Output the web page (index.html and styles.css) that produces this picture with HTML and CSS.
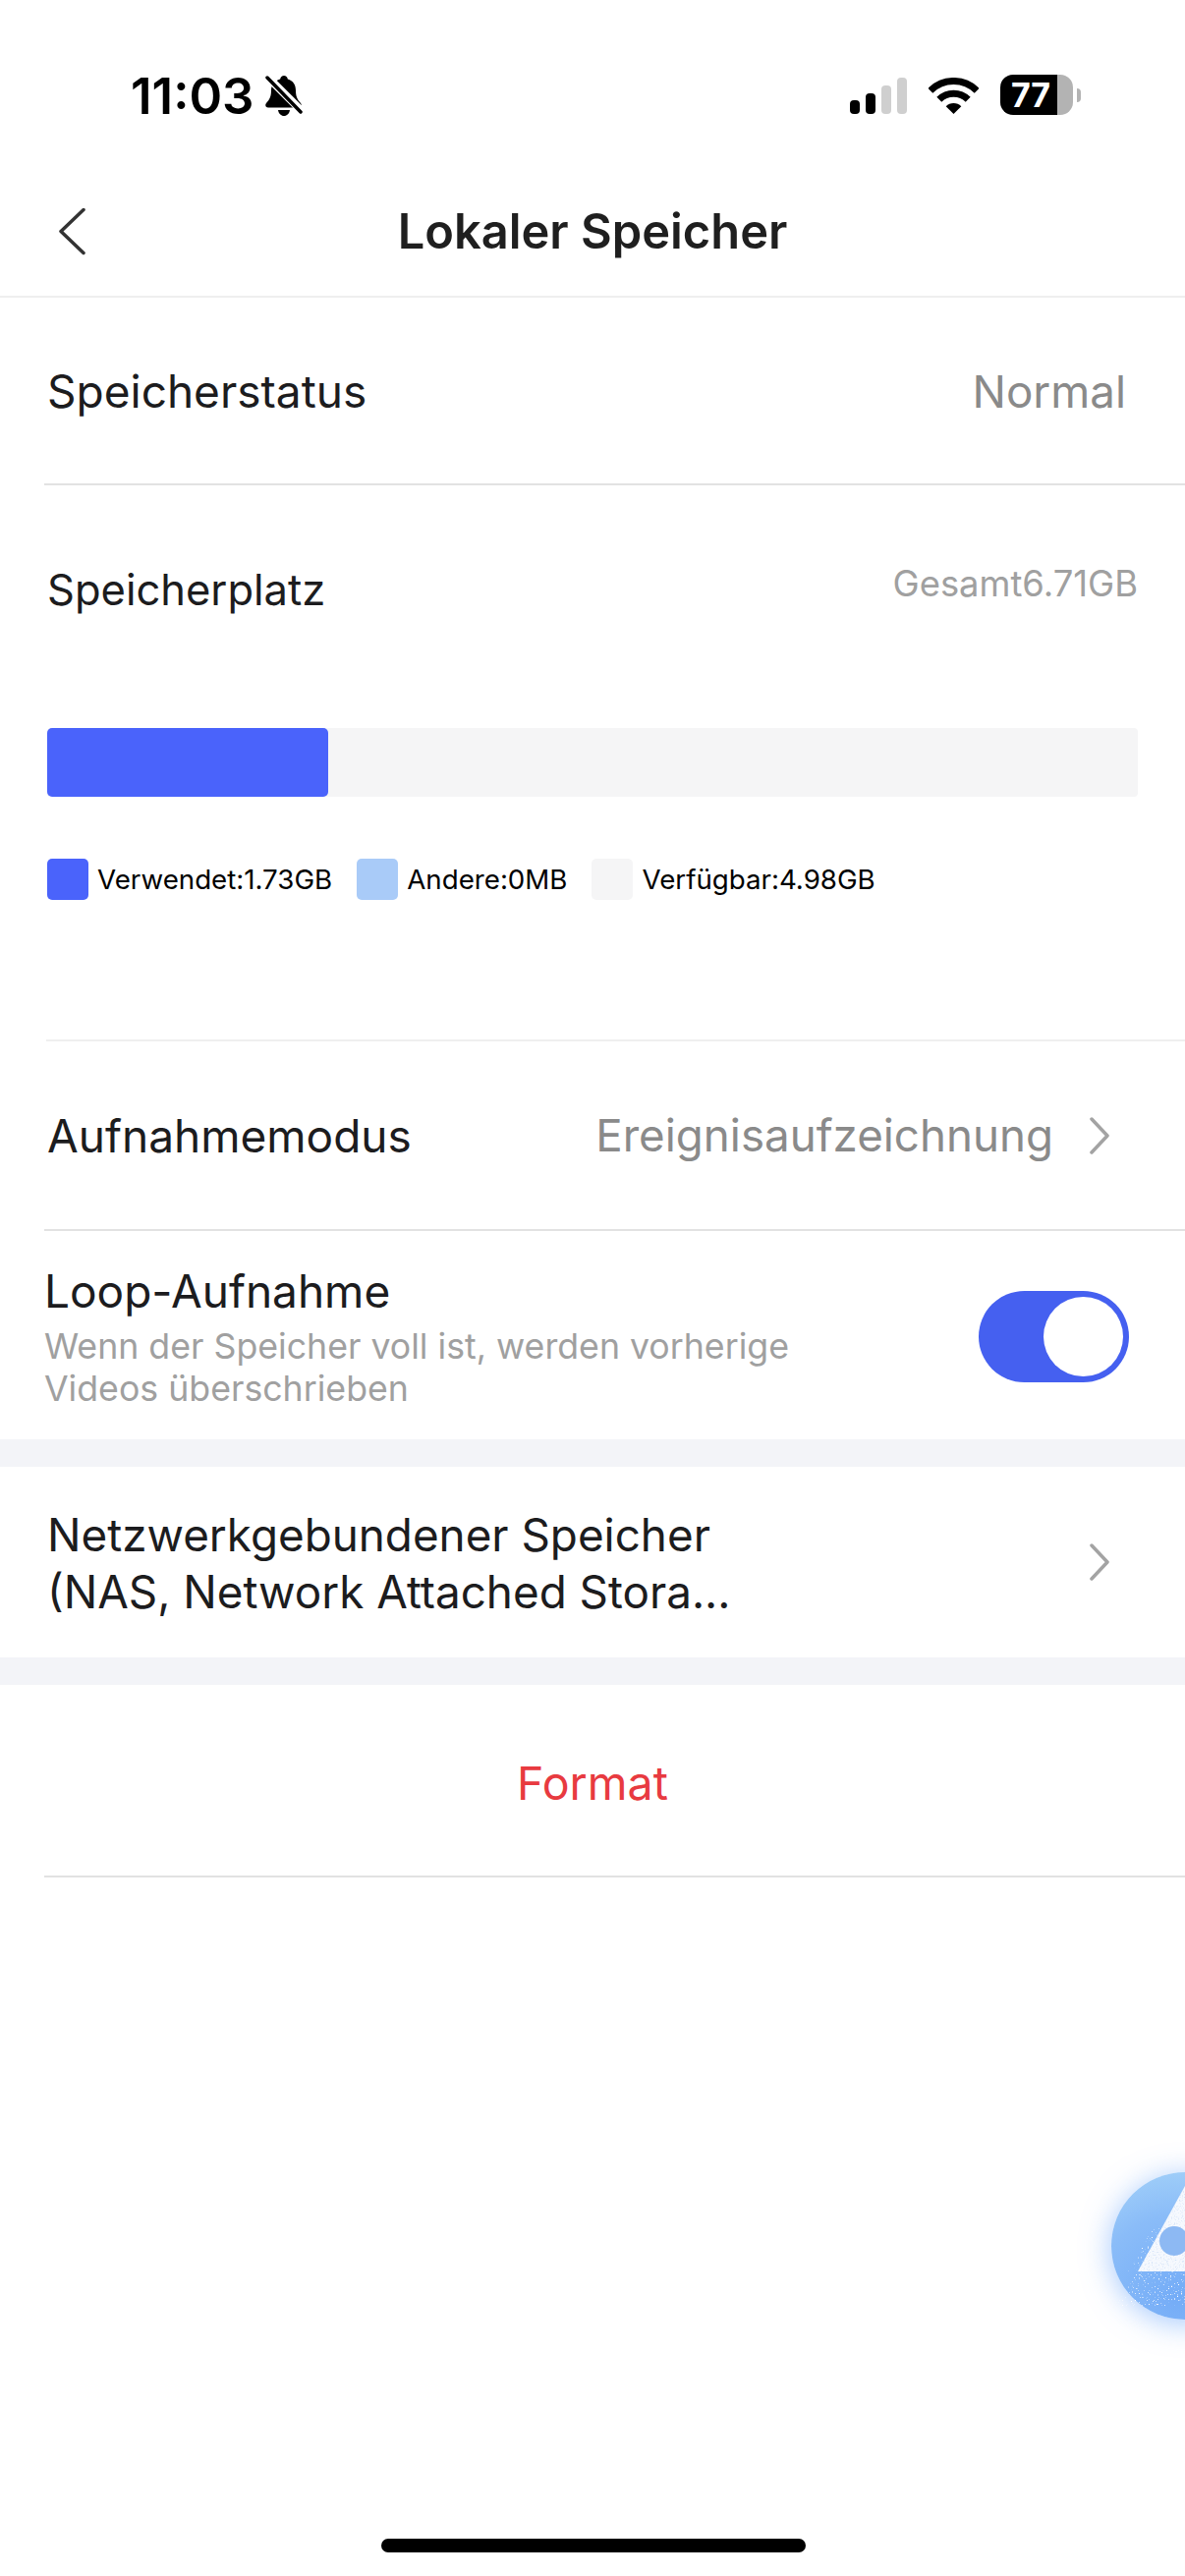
FILE: index.html
```html
<!DOCTYPE html>
<html lang="de">
<head>
    <meta charset="UTF-8">
    <meta name="viewport" content="width=device-width, initial-scale=1.0">
    <title>Lokaler Speicher</title>
    <link rel="stylesheet" href="styles.css">
</head>
<body>
    <div class="phone">
        <div class="status-bar">
            <div class="status-left">
                <span class="time">11:03</span>
                <svg class="bell" width="38" height="41" viewBox="0 0 38 41">
                    <path d="M19 0c2 0 3.500 1.500 3.800 3.500 5.500 1.500 8.200 6 8.200 11.500 0 6 1.500 9 5 13 1.500 2 .8 4.500-2 4.500H3c-2.800 0-3.500-2.500-2-4.500 3.500-4 5-7 5-13C6 9.500 9.500 5 15.200 3.500 15.500 1.500 17 0 19 0z"/>
                    <path d="M13 35h12c-.5 3.500-3 6-6 6s-5.500-2.500-6-6z"/>
                    <path d="M0 -1L39 38" stroke="#fff" stroke-width="8" fill="none"/>
                    <path d="M2 2L36 37" stroke="#000" stroke-width="3.500" stroke-linecap="round" fill="none"/>
                </svg>
            </div>
            <div class="status-right">
                <div class="signal">
                    <span class="signal-bar bar-1"></span>
                    <span class="signal-bar bar-2"></span>
                    <span class="signal-bar bar-3 off"></span>
                    <span class="signal-bar bar-4 off"></span>
                </div>
                <svg class="wifi" width="51" height="37" viewBox="0 0 51 37">
                    <path d="M1.800 13.300A33.500 33.500 0 0 1 49.200 13.300" fill="none" stroke="#000" stroke-width="7"/>
                    <path d="M10.800 22.300A20.800 20.800 0 0 1 40.200 22.300" fill="none" stroke="#000" stroke-width="7"/>
                    <path d="M25.500 37L17.700 29.200A11 11 0 0 1 33.300 29.200z"/>
                </svg>
                <div class="battery">
                    <div class="battery-body"><span class="battery-level">77</span><span class="battery-rest"></span></div>
                    <span class="battery-nub"></span>
                </div>
            </div>
        </div>

        <div class="nav-bar">
            <svg class="back" width="28" height="49" viewBox="0 0 28 49">
                <path d="M26 2.500L3 24.500l23 22" fill="none" stroke="#333" stroke-width="3.500" stroke-linecap="round" stroke-linejoin="round"/>
            </svg>
            <h1 class="title">Lokaler Speicher</h1>
        </div>

        <div class="row row-status">
            <span class="row-label">Speicherstatus</span>
            <span class="row-value">Normal</span>
        </div>

        <div class="storage">
            <div class="storage-head">
                <span class="storage-label">Speicherplatz</span>
                <span class="storage-total">Gesamt6.71GB</span>
            </div>
            <div class="storage-bar"><div class="storage-used" style="width: 286px"></div></div>
            <div class="legend">
                <div class="legend-item"><span class="swatch swatch-used"></span>Verwendet:1.73GB</div>
                <div class="legend-item"><span class="swatch swatch-other"></span>Andere:0MB</div>
                <div class="legend-item"><span class="swatch swatch-free"></span>Verfügbar:4.98GB</div>
            </div>
        </div>

        <div class="row row-mode">
            <span class="row-label">Aufnahmemodus</span>
            <div class="row-right">
                <span class="row-value">Ereignisaufzeichnung</span>
                <svg class="chevron" width="20" height="38" viewBox="0 0 20 38">
                    <path d="M2 2l16 17L2 36" fill="none" stroke="#a3a3a3" stroke-width="3.500" stroke-linecap="round" stroke-linejoin="round"/>
                </svg>
            </div>
        </div>

        <div class="loop">
            <div class="loop-text">
                <div class="loop-title">Loop-Aufnahme</div>
                <div class="loop-desc">Wenn der Speicher voll ist, werden vorherige Videos überschrieben</div>
            </div>
            <div class="toggle"><span class="toggle-knob"></span></div>
        </div>

        <div class="gap"></div>

        <div class="row row-nas">
            <div class="nas-text">Netzwerkgebundener Speicher<br>(NAS, Network Attached Stora...</div>
            <svg class="chevron" width="20" height="38" viewBox="0 0 20 38">
                <path d="M2 2l16 17L2 36" fill="none" stroke="#a3a3a3" stroke-width="3.500" stroke-linecap="round" stroke-linejoin="round"/>
            </svg>
        </div>

        <div class="gap"></div>

        <div class="format">Format</div>

        <div class="float-ball">
            <svg width="75" height="150" viewBox="0 0 75 150">
                <defs>
                    <filter id="grain" x="0" y="0" width="100%" height="100%">
                        <feTurbulence type="fractalNoise" baseFrequency="0.75" numOctaves="2" seed="4"/>
                        <feColorMatrix values="0 0 0 0 .62  0 0 0 0 .74  0 0 0 0 .93  3 0 0 0 -1.550"/>
                        <feComposite in2="SourceAlpha" operator="in" result="specks"/>
                        <feMerge>
                            <feMergeNode in="SourceGraphic"/>
                            <feMergeNode in="specks"/>
                        </feMerge>
                    </filter>
                    <filter id="dust" x="0" y="0" width="100%" height="100%">
                        <feTurbulence type="fractalNoise" baseFrequency="0.7" numOctaves="2" seed="9"/>
                        <feColorMatrix values="0 0 0 0 1  0 0 0 0 1  0 0 0 0 1  7 0 0 0 -4.500"/>
                        <feComposite in2="SourceAlpha" operator="in"/>
                    </filter>
                </defs>
                <path d="M5 136L27 101H75V136z" fill="#fff" filter="url(#dust)"/>
                <path d="M17 101L75 90V40L42 58z" fill="#fff" filter="url(#dust)"/>
                <path d="M27 101L75 14V101z" fill="#f6f9fe" filter="url(#grain)"/>
                <circle cx="64" cy="70" r="15" fill="#8db9f3"/>
            </svg>
        </div>
        <div class="home-indicator"></div>
    </div>
</body>
</html>
```
FILE: styles.css
```css
* {
    box-sizing: border-box;
}
body {
    margin: 0;
    background-color: #fff;
    font-family: Inter, "Noto Sans", sans-serif;
    color: #1c1c1e;
}
.phone {
    position: relative;
    width: 1206px;
    height: 2622px;
    overflow: hidden;
    background-color: #fff;
}

/* status bar */
.status-bar {
    height: 170px;
    display: flex;
    justify-content: space-between;
    padding: 76px 106px 0 133px;
}
.status-left {
    display: flex;
    align-items: flex-start;
    gap: 12px;
}
.time {
    font-size: 51px;
    line-height: 44px;
    font-weight: 600;
    color: #000;
}
.bell {
    margin-top: 1px;
}
.status-right {
    display: flex;
    align-items: flex-start;
    gap: 22px;
    height: 42px;
}
.signal {
    display: flex;
    align-items: flex-end;
    gap: 6px;
    height: 37px;
    margin-top: 3px;
}
.signal-bar {
    width: 10px;
    background-color: #000;
    border-radius: 4px;
}
.bar-1 { height: 14px; }
.bar-2 { height: 21px; }
.bar-3 { height: 29px; }
.bar-4 { height: 37px; }
.signal-bar.off {
    background-color: #cfcfcf;
}
.wifi {
    margin-top: 3px;
}
.battery {
    display: flex;
    align-items: center;
    gap: 4px;
}
.battery-body {
    display: flex;
    width: 74px;
    height: 41px;
    border-radius: 13px;
    overflow: hidden;
}
.battery-level {
    width: 58px;
    background-color: #000;
    color: #fff;
    font-size: 34px;
    line-height: 41px;
    font-weight: 700;
    text-align: center;
    padding-left: 4px;
}
.battery-rest {
    flex: 1;
    background-color: #b3b3b3;
}
.battery-nub {
    width: 4px;
    height: 14px;
    background-color: #b3b3b3;
    border-radius: 0 4px 4px 0;
}

/* nav */
.nav-bar {
    position: relative;
    height: 133px;
    border-bottom: 2px solid #efefef;
    display: flex;
    align-items: center;
    justify-content: center;
}
.back {
    position: absolute;
    left: 59px;
    top: 41px;
}
.title {
    margin: 0;
    font-size: 48.800px;
    font-weight: 600;
    color: #1f1f1f;
}

/* rows */
.row {
    display: flex;
    align-items: center;
    justify-content: space-between;
    margin-left: 45px;
    padding-left: 3px;
    border-bottom: 2px solid #e2e2e2;
}
.row-status {
    height: 191px;
    padding-right: 60px;
}
.row-label {
    font-size: 46px;
    color: #1c1c1e;
}
.row-value {
    font-size: 45.700px;
    color: #8a8a8a;
}
.row-status .row-value {
    padding-top: 2px;
}
.row-right {
    display: flex;
    align-items: center;
    gap: 37px;
}

/* storage */
.storage {
    position: relative;
    height: 566px;
    padding: 0 48px;
}
.storage::after {
    content: "";
    position: absolute;
    left: 47px;
    right: 0;
    bottom: 0;
    height: 2px;
    background-color: #efefef;
}
.storage-head {
    display: flex;
    justify-content: space-between;
    align-items: flex-start;
    padding-top: 80px;
    height: 247px;
}
.storage-label {
    font-size: 43.500px;
}
.storage-total {
    margin-top: -2px;
    font-size: 36.400px;
    color: #a0a0a0;
}
.storage-bar {
    height: 70px;
    background-color: #f5f5f6;
    border-radius: 4px;
}
.storage-used {
    height: 100%;
    background-color: #4a63fb;
    border-radius: 5px;
}
.legend {
    display: flex;
    gap: 25px;
    margin-top: 63px;
}
.legend-item {
    display: flex;
    align-items: center;
    gap: 9px;
    font-size: 27.700px;
    color: #000;
}
.swatch {
    width: 42px;
    height: 42px;
    border-radius: 5px;
}
.swatch-used { background-color: #4a63fb; }
.swatch-other { background-color: #a9cbf8; }
.swatch-free { background-color: #f5f5f6; }

.row-mode {
    height: 193px;
    padding-right: 77px;
}

/* loop recording */
.loop {
    height: 212px;
    display: flex;
    justify-content: space-between;
    padding: 36px 57px 0 45px;
}
.loop-title {
    font-size: 46px;
    line-height: 50px;
}
.loop-desc {
    width: 810px;
    margin-top: 10px;
    font-size: 35.700px;
    line-height: 43px;
    color: #a0a0a0;
}
.toggle {
    width: 153px;
    height: 93px;
    margin-top: 25px;
    padding: 6px;
    display: flex;
    justify-content: flex-end;
    background-color: #4560f0;
    border-radius: 47px;
}
.toggle-knob {
    width: 81px;
    height: 81px;
    background-color: #fff;
    border-radius: 50%;
}

.gap {
    height: 28px;
    background-color: #f3f4f8;
}

.row-nas {
    height: 194px;
    border-bottom: none;
    padding-right: 77px;
}
.nas-text {
    padding-top: 3px;
    font-size: 45.800px;
    line-height: 58px;
}

.format {
    height: 195px;
    margin-top: 1px;
    margin-left: 45px;
    padding: 4px 45px 0 0;
    border-bottom: 2px solid #e2e2e2;
    display: flex;
    align-items: center;
    justify-content: center;
    font-size: 46.500px;
    color: #e83a40;
}

/* overlays */
.float-ball {
    position: absolute;
    left: 1131px;
    top: 2211px;
    width: 150px;
    height: 150px;
    border-radius: 50%;
    background: radial-gradient(circle at 45% 85%, #74acf7 0%, #8abcf8 55%, #a9d6f9 100%);
    box-shadow: 0 4px 30px rgba(90, 155, 250, .55);
}
.home-indicator {
    position: absolute;
    left: 388px;
    top: 2584px;
    width: 432px;
    height: 14px;
    background-color: #000;
    border-radius: 7px;
}
```
